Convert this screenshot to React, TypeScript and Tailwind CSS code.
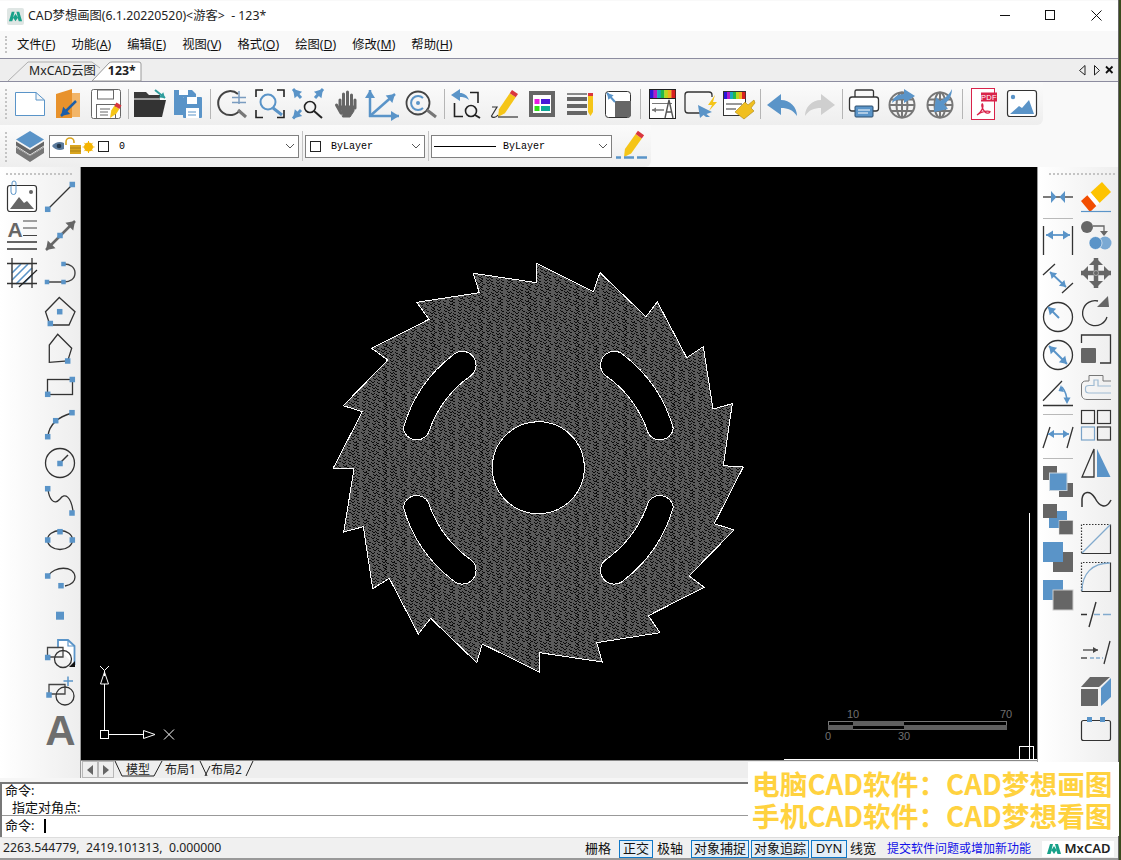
import React from "react";

const B = "#5a94c8";
const G = "#666666";
const UI = "[font-family:'Noto_Sans','Noto_Sans_CJK_SC',sans-serif]";

function Ic({ x, y, w = 38, h = 38, children }: { x: number; y: number; w?: number; h?: number; children?: React.ReactNode }) {
  return (
    <svg width={w} height={h} viewBox={`${x - w / 2} ${y - h / 2} ${w} ${h}`} fill="none" className="shrink-0 overflow-visible block">
      {children}
    </svg>
  );
}

function Sq({ x, y, s = 5.5 }: { x: number; y: number; s?: number }) {
  return <rect x={x - s / 2} y={y - s / 2} width={s} height={s} fill={B} />;
}

function Arr({ a, b, c = B, sw = 2, hl = 7, hw = 4, both = false }: { a: [number, number]; b: [number, number]; c?: string; sw?: number; hl?: number; hw?: number; both?: boolean }) {
  const dx = b[0] - a[0];
  const dy = b[1] - a[1];
  const l = Math.hypot(dx, dy);
  const ux = dx / l;
  const uy = dy / l;
  const head = (p: [number, number], s: number) => {
    const bx = p[0] - s * ux * hl;
    const by = p[1] - s * uy * hl;
    return `${p[0]},${p[1]} ${bx - uy * hw},${by + ux * hw} ${bx + uy * hw},${by - ux * hw}`;
  };
  return (
    <g>
      <line x1={a[0]} y1={a[1]} x2={b[0]} y2={b[1]} stroke={c} strokeWidth={sw} />
      <polygon points={head(b, 1)} fill={c} />
      {both && <polygon points={head(a, -1)} fill={c} />}
    </g>
  );
}

function Pencil({ tip, top, w = 5 }: { tip: [number, number]; top: [number, number]; w?: number }) {
  const dx = top[0] - tip[0];
  const dy = top[1] - tip[1];
  const l = Math.hypot(dx, dy);
  const ux = dx / l;
  const uy = dy / l;
  const nx = -uy * w;
  const ny = ux * w;
  const s = (k: number) => [tip[0] + ux * k, tip[1] + uy * k];
  const [bx, by] = s(7);
  const [cx, cy] = s(l - 4);
  return (
    <g>
      <polygon points={`${tip[0]},${tip[1]} ${bx + nx},${by + ny} ${cx + nx},${cy + ny} ${cx - nx},${cy - ny} ${bx - nx},${by - ny}`} fill="#f5c518" />
      <polygon points={`${cx + nx},${cy + ny} ${top[0] + nx},${top[1] + ny} ${top[0] - nx},${top[1] - ny} ${cx - nx},${cy - ny}`} fill="#d9363e" />
    </g>
  );
}

function Rainbow({ x, y, w, h }: { x: number; y: number; w: number; h: number }) {
  const cols = ["#2a18d8", "#b01ec8", "#18a8c0", "#22b84a", "#b8d820", "#f0b020", "#d82020"];
  return (
    <g>
      {cols.map((c, i) => (
        <rect key={c} x={x + (i * w) / cols.length} y={y} width={w / cols.length + 0.3} height={h} fill={c} />
      ))}
    </g>
  );
}

function Globe({ cx, cy }: { cx: number; cy: number }) {
  return (
    <g stroke="#777" strokeWidth="2">
      <circle cx={cx} cy={cy} r="12.5" />
      <ellipse cx={cx} cy={cy} rx="5.5" ry="12.5" />
      <line x1={cx} y1={cy - 12} x2={cx} y2={cy + 12} />
      <line x1={cx - 12} y1={cy} x2={cx + 12} y2={cy} />
      <line x1={cx - 11} y1={cy - 5.5} x2={cx + 11} y2={cy - 5.5} />
      <line x1={cx - 11} y1={cy + 6} x2={cx + 11} y2={cy + 6} />
    </g>
  );
}

const Sep = () => (
  <div className="w-[6px] h-[30px] shrink-0 flex justify-center">
    <div className="w-px h-full bg-[#b5b5b5]" />
  </div>
);

const top = (x: number, el: React.ReactNode) => (
  <Ic x={x} y={104}>
    {el}
  </Ic>
);

const group1 = [
  top(30, <path d="M15.5 92.5H36L44.5 100V115.5H15.5Z M36 92.5V100H44.5" stroke={B} fill="#fff" />),
  top(68, (
    <g>
      <rect x="72" y="93" width="8" height="24" fill="#f2b568" />
      <path d="M56 94 L72 89 V118 H56Z" fill="#e8922c" />
      <Arr a={[76, 101]} b={[61, 116]} c="#1d5ea8" sw={2.5} hl={8} hw={5} />
    </g>
  )),
  top(106, (
    <g>
      <rect x="91.5" y="89.5" width="29" height="29" rx="2" stroke="#666" fill="#fff" />
      <rect x="97.5" y="90" width="16" height="9" stroke="#666" />
      <rect x="96.5" y="104.5" width="19" height="14" stroke="#666" />
      <path d="M100 109h10M100 112h8M100 115h8" stroke="#666" />
      <Pencil tip={[110, 118]} top={[119, 104]} w={3} />
    </g>
  )),
];
const group2 = [
  top(150, (
    <g>
      <path d="M134 92h12l3 3h11v5h-26Z" fill="#3a3a3a" />
      <path d="M134 100H166L162 117H134Z" fill="#333" />
      <path d="M134 99H166" stroke="#fff" />
      <Arr a={[155, 90]} b={[165, 98]} c="#2e9d9d" sw={2} hl={5} hw={3.5} />
    </g>
  )),
  top(188, (
    <g>
      <path d="M174 90H192L196 94V97H183V115H174Z" fill={B} />
      <rect x="179" y="90" width="9" height="5" fill="#fff" />
      <rect x="183" y="97" width="19" height="21" rx="1" fill={B} />
      <rect x="187" y="97" width="10" height="7" fill="#fff" />
      <rect x="186" y="108" width="13" height="10" fill="#fff" />
      <path d="M188 112h8M188 115h8" stroke={B} />
    </g>
  )),
];
const group3 = [
  top(232, (
    <g>
      <path d="M238 94A12 12 0 1 0 240 110" stroke="#444" strokeWidth="2" />
      <path d="M232 97.5H246M239 91V104M232 102.5H246" stroke="#7a9cc0" strokeWidth="1.5" />
      <line x1="238" y1="110" x2="246" y2="117" stroke="#777" strokeWidth="3" />
    </g>
  )),
  top(270, (
    <g>
      <path d="M256 97V90H263M277 90H284V97M256 110V117.5H263M277 117.5H284V110" stroke="#222" strokeWidth="1.6" />
      <circle cx="268" cy="102" r="7.5" stroke={B} strokeWidth="2" />
      <line x1="273" y1="108" x2="282" y2="115" stroke={B} strokeWidth="3" />
    </g>
  )),
  top(308, (
    <g>
      <Arr a={[301, 98]} b={[293, 89]} sw={3} hl={8} hw={5} />
      <Arr a={[315, 98]} b={[323, 89]} sw={3} hl={8} hw={5} />
      <Arr a={[301, 110]} b={[293, 118.5]} sw={3} hl={8} hw={5} />
      <circle cx="310" cy="107" r="5.5" stroke="#222" strokeWidth="1.6" />
      <line x1="314" y1="111" x2="322" y2="118" stroke="#222" strokeWidth="2" />
    </g>
  )),
  top(346, (
    <g stroke="#666" strokeLinecap="round" strokeWidth="3">
      <path d="M340 100V110M343.5 94V107M347.5 92V107M351.5 95V108M355 100V108" />
      <path d="M336.5 105L341 113" />
      <path d="M340 106H354V111L350 117H343Z" fill="#666" strokeWidth="1" />
    </g>
  )),
  top(384, (
    <g>
      <Arr a={[370, 117]} b={[370, 90]} sw={2.5} hl={8} hw={5} />
      <Arr a={[369, 116]} b={[399, 116]} sw={2.5} hl={8} hw={5} />
      <Arr a={[370, 116]} b={[395, 94]} sw={2.5} hl={8} hw={5} />
    </g>
  )),
  top(422, (
    <g>
      <circle cx="418" cy="103" r="11.5" stroke="#444" strokeWidth="1.8" />
      <path d="M423 98A7 7 0 1 0 423 108" stroke={B} strokeWidth="2" />
      <circle cx="418" cy="103" r="2" fill={B} />
      <line x1="427" y1="110" x2="436" y2="117" stroke="#777" strokeWidth="3" />
    </g>
  )),
];
const group4 = [
  top(466, (
    <g>
      <path d="M451 95L460 89V93C464 93 467 95 469 100C465 97 463 97 460 97V101Z" fill={B} />
      <path d="M470 92.5H478V103M454.5 103V116.5H463" stroke="#222" strokeWidth="1.6" />
      <circle cx="471" cy="111" r="5.5" stroke="#222" strokeWidth="1.6" />
      <line x1="475" y1="115" x2="480" y2="118" stroke="#222" strokeWidth="2" />
    </g>
  )),
  top(504, (
    <g>
      <Pencil tip={[498, 117]} top={[515, 92]} w={3.6} />
      <path d="M492 107H497L491.5 116C492 118 496 118 498 115" stroke="#333" strokeWidth="1.2" />
      <line x1="498" y1="117" x2="518" y2="117" stroke="#333" strokeWidth="1.2" />
    </g>
  )),
  top(542, (
    <g>
      <rect x="529" y="91" width="26" height="26" fill="#666" />
      <rect x="533" y="95" width="18" height="18" fill="#fff" />
      <rect x="534.5" y="99" width="5" height="5" fill="#e81ae0" />
      <rect x="541" y="99" width="9" height="5" fill="#4a18d8" />
      <rect x="534.5" y="106" width="5" height="5" fill="#2ee018" />
      <rect x="541" y="106" width="9" height="5" fill="#0fa898" />
    </g>
  )),
  top(580, (
    <g>
      <path d="M567 94H587" stroke="#666" strokeWidth="1.5" />
      <rect x="567" y="97" width="20" height="4" fill="#666" />
      <rect x="567" y="104" width="20" height="4" fill="#666" />
      <rect x="567" y="111" width="20" height="4" fill="#666" />
      <path d="M588 93H593V112L590.5 116L588 112Z" fill="#f5c518" />
      <rect x="588" y="93" width="5" height="3" fill="#d9363e" />
    </g>
  )),
  top(618, (
    <g>
      <rect x="605.5" y="91.5" width="25" height="26" rx="3" stroke="#333" fill="#fff" />
      <path d="M615 101H631V114A3 3 0 0 1 628 117H615Z" fill="#666" />
      <Arr a={[615, 102]} b={[607, 93]} sw={2} hl={6} hw={3.5} />
    </g>
  )),
];
const group5 = [
  top(661, (
    <g>
      <rect x="648.5" y="89.5" width="26" height="29" stroke="#222" fill="#fff" />
      <Rainbow x={649} y={90} w={25} h={8} />
      <line x1="649" y1="98.5" x2="674" y2="98.5" stroke="#222" />
      <path d="M651 103.5H671" stroke="#777" />
      <Arr a={[663, 110]} b={[651, 110]} c="#777" sw={1.5} hl={4} hw={2.5} />
      <path d="M664 118L668 100L672 118M665 112H671" stroke="#555" strokeWidth="1.4" />
    </g>
  )),
  top(700, (
    <g>
      <path d="M705 113H688A3 3 0 0 1 685 110V95A3 3 0 0 1 688 92H709A3 3 0 0 1 712 95V97" stroke="#333" strokeWidth="1.3" />
      <path d="M699 106L713 113L707.5 115L711 118L707 118L704.5 116L701 119Z" fill={B} transform="translate(-1 -1)" />
      <path d="M715 95L708 105H712L709 111L717 102H713Z" fill="#f5c518" />
    </g>
  )),
  top(738, (
    <g>
      <rect x="723.5" y="91.5" width="22" height="24" stroke="#333" fill="#fff" />
      <Rainbow x={724} y={92} w={21} h={7} />
      <path d="M726 104H742M726 109H736" stroke="#777" strokeWidth="1.4" />
      <path d="M735 112L745 102L748 105L754 100L755 103L751 108L754 111L744 119Z" fill="#f0bf20" stroke="#a98412" strokeWidth=".6" />
    </g>
  )),
];
const group6 = [
  top(782, <path d="M767 105L781 94V100C790 100 797 107 797 116C793 110 788 108 781 108V115Z" fill={B} />),
  top(820, <path d="M835 105L821 94V100C812 100 805 107 805 116C809 110 814 108 821 108V115Z" fill="#cfcfcf" />),
];
const group7 = [
  top(864, (
    <g>
      <path d="M855 99V91.5A1.5 1.5 0 0 1 856.5 90H872A1.5 1.5 0 0 1 873.5 91.5V99" stroke="#333" strokeWidth="1.3" />
      <rect x="849.5" y="97" width="29" height="14" rx="2.5" stroke="#333" strokeWidth="1.3" fill="#fff" />
      <rect x="855" y="106" width="18" height="11" rx="1" fill={B} stroke="#2d4e6e" />
      <path d="M858 110H870M858 113H868" stroke="#fff" />
    </g>
  )),
  top(902, (
    <g>
      <Globe cx={902} cy={105} />
      <path d="M892 103C893 97 898 94 904 94V89L915 96L904 103V99C899 99 895 100 892 103Z" fill={B} />
    </g>
  )),
  top(940, (
    <g>
      <Globe cx={940} cy={105} />
      <path d="M952 89C952 96 948 102 944 104L948 109L934 112L936 97L940 101C944 99 949 95 952 89Z" fill={B} />
    </g>
  )),
];
const group8 = [
  top(984, (
    <g>
      <rect x="971.5" y="88.5" width="23" height="31" stroke="#d9234a" fill="#fff" />
      <rect x="981" y="92.5" width="16" height="9" fill="#d9234a" />
      <text x="989" y="100" textAnchor="middle" fontSize="7.5" fill="#fff" fontFamily="'Liberation Sans'" letterSpacing=".4">PDF</text>
      <path d="M977 115C981 113 984 107 982.5 104C981 104 982 109 985 112C987 114 990 113 990 111.5C988 110.5 982 111 977 115Z" stroke="#d9234a" strokeWidth="1.3" />
    </g>
  )),
  top(1022, (
    <g>
      <rect x="1007.5" y="90.5" width="29" height="26" rx="2.5" stroke="#333" strokeWidth="1.2" fill="#fff" />
      <circle cx="1013" cy="97" r="2.2" fill={B} />
      <path d="M1010 114L1019 106L1022 108L1029 100L1034 114Z" fill={B} />
    </g>
  )),
];

function Toolbar1() {
  return (
    <div className="relative w-[1043px] h-[43px] shrink-0 flex items-center pl-[11px] rounded-br-md bg-gradient-to-b from-[#fbfbfb] to-[#eeeeee]">
      <div className="absolute left-[5px] top-[7px] h-[30px] border-l-2 border-dotted border-[#c4c4c4]" />
      {group1}
      <Sep />
      {group2}
      <Sep />
      {group3}
      <Sep />
      {group4}
      <Sep />
      {group5}
      <Sep />
      {group6}
      <Sep />
      {group7}
      <Sep />
      {group8}
    </div>
  );
}

function Chev() {
  return (
    <svg width="10" height="6" viewBox="0 0 10 6" fill="none" className="shrink-0">
      <path d="M1 1L5 5L9 1" stroke="#555" />
    </svg>
  );
}

function Box() {
  return <div className="w-[11px] h-[11px] border border-[#222] bg-white shrink-0" />;
}

const MONO = "[font-family:'Liberation_Mono',monospace]";

function Toolbar2() {
  return (
    <div className="relative w-[651px] h-[42px] shrink-0 flex items-center rounded-br-md bg-gradient-to-b from-[#fbfbfb] to-[#eeeeee]">
      <div className="absolute left-[5px] top-[7px] h-[30px] border-l-2 border-dotted border-[#c4c4c4]" />
      <div className="ml-[11px] shrink-0">
        <Ic x={30} y={146}>
          <path d="M30 150L44 141.5V147L30 156L16 147V141.5Z" fill={G} />
          <path d="M30 156L44 147.5V153L30 162L16 153V147.5Z" fill="#777" />
          <path d="M30 131L44 139.5L30 148L16 139.5Z" fill={B} />
          <path d="M16 146L30 155L44 146" stroke="#fff" strokeWidth=".8" />
        </Ic>
      </div>
      <div className="w-[250px] h-[23px] border border-[#808080] bg-white flex items-center shrink-0">
        <svg width="56" height="20" viewBox="50 136 56 20" fill="none" className="shrink-0">
          <path d="M52 146C55 142 60 141 64 143V149C60 151 55 150 52 146Z" fill="#5a7a9c" />
          <circle cx="59" cy="146" r="2.3" fill="#24384c" />
          <path d="M66 145V142A4 4 0 0 1 74 142V143" stroke="#d9a520" strokeWidth="1.6" />
          <rect x="70" y="145" width="11" height="9" fill="#d9a520" />
          <path d="M70 148H81M70 151H81" stroke="#9a7312" strokeWidth=".7" />
          <circle cx="88.5" cy="147" r="4.5" fill="#f5b400" />
          <path d="M88.5 141V153M82.5 147H94.5M84.3 142.8L92.7 151.2M92.7 142.8L84.3 151.2" stroke="#f5b400" />
        </svg>
        <div className="-ml-[8px]"><Box /></div>
        <span className={`ml-[10px] text-[10px] text-black ${MONO}`}>0</span>
        <div className="flex-1" />
        <div className="mr-[3px]"><Chev /></div>
      </div>
      <div className="w-[6px] h-[30px] flex justify-center shrink-0"><div className="w-px h-full bg-[#c4c4c4]" /></div>
      <div className="w-[120px] h-[23px] border border-[#808080] bg-white flex items-center pl-[4px] shrink-0">
        <Box />
        <span className={`ml-[10px] text-[10px] text-black ${MONO}`}>ByLayer</span>
        <div className="flex-1" />
        <div className="mr-[3px]"><Chev /></div>
      </div>
      <div className="w-[6px] h-[30px] flex justify-center shrink-0"><div className="w-px h-full bg-[#c4c4c4]" /></div>
      <div className="w-[181px] h-[23px] border border-[#808080] bg-white flex items-center pl-[2px] shrink-0">
        <div className="w-[62px] h-px bg-black shrink-0" />
        <span className={`ml-[7px] text-[10px] text-black ${MONO}`}>ByLayer</span>
        <div className="flex-1" />
        <div className="mr-[3px]"><Chev /></div>
      </div>
      <Ic x={630} y={146}>
        <Pencil tip={[623, 157]} top={[640, 133]} w={3.8} />
        <path d="M615 157.5H620M623 157.5H633M636 157.5H646" stroke={B} strokeWidth="2.4" />
      </Ic>
    </div>
  );
}

const Cell = ({ x, y, children }: { x: number; y: number; children?: React.ReactNode }) => (
  <Ic x={x} y={y}>{children}</Ic>
);

const LeftA = [
  <Cell key="a" x={22} y={198}>
    <rect x="7.5" y="185.5" width="29" height="26" rx="2.5" stroke="#333" strokeWidth="1.2" fill="#fff" />
    <circle cx="31" cy="192" r="2" fill="#666" />
    <path d="M10 209L19 197L24 203L27 201L34 209Z" fill="#666" />
    <path d="M12 185.5V183A2 2 0 0 1 16 183V192A1.5 1.5 0 0 1 11 192V186" stroke={B} strokeWidth="1" fill="none" />
  </Cell>,
  <Cell key="b" x={22} y={236}>
    <text x="7.5" y="237" fontSize="21" fontWeight="700" fill="#666" fontFamily="'Liberation Sans'">A</text>
    <path d="M23 221H37M23 228H37M23 235.5H37" stroke="#444" strokeWidth="1.2" />
    <path d="M7 242H37M7 249H37" stroke="#333" strokeWidth="1.3" />
  </Cell>,
  <Cell key="c" x={22} y={274}>
    <rect x="12" y="264" width="20" height="20" fill="#fff" stroke="#999" strokeWidth=".6" />
    <path d="M12 273L21 264M12 280L28 264M16 284L32 268M23 284L32 275" stroke={B} strokeWidth="1.6" />
    <path d="M7 263.5H37M7 283.5H37M12 258V288M32 258V288" stroke="#333" strokeWidth="1.3" />
    <path d="M19 287L37 270" stroke="#222" strokeWidth="1.2" />
  </Cell>,
];

const LeftB = [
  <Cell key="1" x={60} y={198}>
    <line x1="48" y1="209" x2="72" y2="185" stroke="#333" strokeWidth="1.3" />
    <Sq x={47.7} y={209.3} /><Sq x={72.3} y={184.5} />
  </Cell>,
  <Cell key="2" x={60} y={236}>
    <Arr a={[46, 250]} b={[75, 221]} c="#666" sw={2.5} hl={8} hw={5.5} both />
    <Sq x={60} y={235.5} />
  </Cell>,
  <Cell key="3" x={60} y={274}>
    <path d="M48 282H64M64 264C70 264 75 267 75 273C75 279 70 282 64 282" stroke="#444" strokeWidth="1.4" />
    <Sq x={47} y={282} s={4.5} /><Sq x={63.5} y={282} s={4.5} /><Sq x={63.5} y={264} s={4.5} />
  </Cell>,
  <Cell key="4" x={60} y={312}>
    <path d="M59.3 297.5L75 311.7L69 325H50L45.5 311.7Z" stroke="#333" strokeWidth="1.3" />
    <Sq x={59.7} y={311.7} /><Sq x={50.3} y={323.5} />
  </Cell>,
  <Cell key="5" x={60} y={350}>
    <path d="M57.7 334.3L71.7 348.3L67.7 361L49.3 362.3V345Z" stroke="#333" strokeWidth="1.3" />
    <Sq x={67.7} y={361} />
  </Cell>,
  <Cell key="6" x={60} y={388}>
    <rect x="47.5" y="379.5" width="25" height="15" stroke="#333" strokeWidth="1.3" />
    <Sq x={47.7} y={394.3} /><Sq x={72.3} y={379.5} />
  </Cell>,
  <Cell key="7" x={60} y={426}>
    <path d="M48 436C49 427 54 418 72 413" stroke="#333" strokeWidth="1.3" />
    <Sq x={47.7} y={436.7} /><Sq x={55.7} y={420.7} /><Sq x={72} y={412.7} />
  </Cell>,
  <Cell key="8" x={60} y={464}>
    <circle cx="60" cy="463" r="14.5" stroke="#333" strokeWidth="1.3" />
    <line x1="60" y1="463" x2="68" y2="455" stroke="#333" strokeWidth="1.5" />
    <Sq x={60} y={463.5} />
  </Cell>,
  <Cell key="9" x={60} y={502}>
    <path d="M48 489C49 499 54 506 60 499C65 492 71 497 73 511" stroke="#333" strokeWidth="1.3" />
    <Sq x={47.7} y={488.7} /><Sq x={72} y={513} />
  </Cell>,
  <Cell key="10" x={60} y={540}>
    <ellipse cx="60" cy="540" rx="12.5" ry="9.5" stroke="#333" strokeWidth="1.3" />
    <Sq x={47.7} y={540} /><Sq x={60} y={531.7} /><Sq x={72.3} y={540} />
  </Cell>,
  <Cell key="11" x={60} y={578}>
    <path d="M48 576C54 566 74 565 75 577C75 582 70 585 65 586" stroke="#333" strokeWidth="1.3" />
    <Sq x={47.7} y={576} /><Sq x={61} y={585.7} />
  </Cell>,
  <Cell key="12" x={60} y={616}>
    <Sq x={60} y={615.7} s={8} />
  </Cell>,
  <Cell key="13" x={60} y={654}>
    <path d="M58 648V640H68L74.5 646V665" stroke={B} strokeWidth="1.8" fill="#fff" />
    <path d="M68 640V646H74" stroke={B} strokeWidth="1.2" />
    <path d="M47.5 657V647.5H63V657H47.5" stroke="#444" strokeWidth="1.3" />
    <circle cx="63" cy="659" r="8.5" stroke="#333" strokeWidth="1.3" />
    <Sq x={47.7} y={657.5} />
    <polygon points="75,667 69,667 75,661" fill="#111" />
  </Cell>,
  <Cell key="14" x={60} y={692}>
    <path d="M49 694V684.5H65V694H49" stroke="#444" strokeWidth="1.3" />
    <circle cx="65" cy="696" r="9" stroke="#333" strokeWidth="1.3" />
    <Sq x={49} y={695} />
    <path d="M68 676.5V686M63.5 681H73" stroke={B} strokeWidth="1.5" />
  </Cell>,
  <Cell key="15" x={60} y={730}>
    <text x="60.5" y="744.5" textAnchor="middle" fontSize="42" fontWeight="700" fill="#6e6e6e" fontFamily="'Liberation Sans'">A</text>
  </Cell>,
];

const RightA1 = (
  <Cell x={1058} y={197}>
    <line x1="1043" y1="197" x2="1073" y2="197" stroke="#333" strokeWidth="1.3" />
    <polygon points="1051,191 1051,203 1056.5,197" fill={B} />
    <polygon points="1065,191 1065,203 1059.5,197" fill={B} />
  </Cell>
);
const HSep = ({ h }: { h: string }) => (
  <div className={`${h} flex items-center justify-center`}>
    <div className="w-[30px] h-px bg-[#b9b9b9]" />
  </div>
);

const RightA = [
  <HSep key="s1" h="h-[5px]" />,
  <Cell key="2" x={1058} y={240}>
    <path d="M1043.5 226V255M1072.5 226V255" stroke="#333" strokeWidth="1.3" />
    <Arr a={[1046, 235]} b={[1070, 235]} sw={1.8} hl={7} hw={4.5} both />
  </Cell>,
  <Cell key="3" x={1058} y={278}>
    <path d="M1043 275L1055 264M1062 293L1073 283" stroke="#333" strokeWidth="1.3" />
    <Arr a={[1050, 272]} b={[1066, 287]} sw={1.8} hl={6} hw={4} both />
  </Cell>,
  <Cell key="4" x={1058} y={316}>
    <circle cx="1058" cy="317" r="14.5" stroke="#333" strokeWidth="1.3" />
    <Arr a={[1059, 318]} b={[1048, 307]} sw={2} hl={7} hw={4.5} />
  </Cell>,
  <Cell key="5" x={1058} y={354}>
    <circle cx="1058" cy="355" r="14.5" stroke="#333" strokeWidth="1.3" />
    <Arr a={[1049, 346]} b={[1067, 364]} sw={2} hl={7} hw={4.5} both />
  </Cell>,
  <Cell key="6" x={1058} y={392}>
    <path d="M1043 400.7L1062 381M1043 405.5H1073" stroke="#333" strokeWidth="1.3" />
    <path d="M1062 387C1066 392 1067 397 1067 402" stroke={B} strokeWidth="1.5" />
    <polygon points="1061,385 1064,392 1058.5,391" fill={B} />
    <polygon points="1067,404 1063.5,397.5 1070.5,397.5" fill={B} />
  </Cell>,
  <HSep key="s2" h="h-[6px]" />,
  <Cell key="7" x={1058} y={436}>
    <path d="M1043 448L1050 427M1067 448L1073 427" stroke="#333" strokeWidth="1.3" />
    <Arr a={[1048, 434]} b={[1069, 434]} sw={1.6} hl={6} hw={4} both />
  </Cell>,
  <HSep key="s3" h="h-[6px]" />,
  <Cell key="8" x={1058} y={480}>
    <rect x="1043" y="466" width="14" height="14" fill="#666" />
    <rect x="1059" y="483" width="14" height="14" fill="#666" />
    <rect x="1049.5" y="473" width="17.5" height="17.5" fill={B} stroke="#c8d4de" />
  </Cell>,
  <Cell key="9" x={1058} y={518}>
    <rect x="1043" y="504" width="14" height="14" fill="#666" />
    <rect x="1057" y="511" width="10" height="9" fill={B} />
    <rect x="1049" y="518" width="10" height="10" fill={B} />
    <rect x="1059" y="520.5" width="14" height="14" fill="#666" stroke="#ddd" strokeWidth=".5" />
  </Cell>,
  <Cell key="10" x={1058} y={556}>
    <path d="M1063 552H1073V572H1053V562H1063Z" fill="#666" />
    <rect x="1043" y="542" width="20" height="20" fill={B} />
  </Cell>,
  <Cell key="11" x={1058} y={594}>
    <rect x="1043" y="580" width="20" height="20" fill={B} />
    <rect x="1053" y="590" width="20" height="20" fill="#666" stroke="#ccc" />
  </Cell>,
];

const RightB = [
  <Cell key="1" x={1096} y={197}>
    <polygon points="1102,182 1111,192 1099.5,203 1090.5,192.5" fill="#fdc300" />
    <polygon points="1090.5,192.5 1099.5,203 1096.3,206 1087.3,195.3" fill="#fff" />
    <polygon points="1087.3,195.3 1096.3,206 1090,212 1081,201" fill="#f24d00" />
    <line x1="1081" y1="211.5" x2="1111" y2="211.5" stroke={B} strokeWidth="1.2" />
  </Cell>,
  <Cell key="2" x={1096} y={235}>
    <circle cx="1087" cy="227" r="6" fill="#666" />
    <path d="M1093 226H1104V233" stroke="#666" strokeWidth="1.3" />
    <polygon points="1100,231 1108,231 1104,236" fill="#666" />
    <circle cx="1105" cy="243" r="6.5" fill="#7aa9d3" />
    <circle cx="1095.5" cy="243" r="6.5" fill={B} stroke="#fff" strokeWidth=".6" />
  </Cell>,
  <Cell key="3" x={1096} y={273}>
    <Arr a={[1096, 273]} b={[1096, 258]} c="#666" sw={4.5} hl={7} hw={7} />
    <Arr a={[1096, 273]} b={[1096, 288]} c="#666" sw={4.5} hl={7} hw={7} />
    <Arr a={[1096, 273]} b={[1081, 273]} c="#666" sw={4.5} hl={7} hw={7} />
    <Arr a={[1096, 273]} b={[1111, 273]} c="#666" sw={4.5} hl={7} hw={7} />
    <circle cx="1096" cy="273" r="2.5" stroke="#aaa" strokeWidth="1" />
  </Cell>,
  <Cell key="4" x={1096} y={311}>
    <path d="M1098 301A12.5 12.5 0 1 0 1107 317" stroke="#333" strokeWidth="1.3" />
    <polygon points="1108,296 1109,307 1097,307" fill="#666" />
  </Cell>,
  <Cell key="5" x={1096} y={349}>
    <path d="M1081.5 343V335H1110.5V363H1100" stroke="#333" strokeWidth="1.3" />
    <rect x="1081" y="348" width="15" height="15" rx="1" fill="#666" />
  </Cell>,
  <Cell key="6" x={1096} y={387}>
    <path d="M1111 399.5H1087C1083 399.5 1081.5 397 1081.5 394V385C1081.5 382 1084 381 1086 381H1089V375.5H1103V381H1111" stroke="#777" strokeWidth="1" />
    <path d="M1111 393H1089C1086 393 1085.5 392 1085.5 390V388C1085.5 386 1086.5 385.5 1089 385.5H1094V380H1098V386H1111" stroke="#9fbbd3" strokeWidth="1.2" />
  </Cell>,
  <Cell key="7" x={1096} y={425}>
    <rect x="1081.5" y="410.5" width="13" height="13" stroke="#333" strokeWidth="1.2" />
    <rect x="1097.5" y="410.5" width="13" height="13" stroke="#333" strokeWidth="1.2" />
    <rect x="1081.5" y="427" width="13" height="13" stroke="#7aa3c8" strokeWidth="1.2" />
    <rect x="1097.5" y="427" width="13" height="13" stroke="#333" strokeWidth="1.2" />
  </Cell>,
  <Cell key="8" x={1096} y={463}>
    <path d="M1094 449V477H1082Z" stroke="#333" strokeWidth="1.3" />
    <path d="M1097 449V477H1110.5Z" fill={B} />
  </Cell>,
  <Cell key="9" x={1096} y={501}>
    <path d="M1082 507V499C1083 491 1090 490 1095 498C1099 506 1106 510 1111 500" stroke="#333" strokeWidth="1.5" />
  </Cell>,
  <Cell key="10" x={1096} y={539}>
    <path d="M1081.5 553.5H1110.5V524.5" stroke="#333" strokeWidth="1.2" />
    <path d="M1081.5 553V524.5H1110" stroke="#333" strokeWidth="1.2" strokeDasharray="1.5 1.5" />
    <line x1="1082" y1="553" x2="1110" y2="525" stroke="#82aacd" strokeWidth="1.3" />
  </Cell>,
  <Cell key="11" x={1096} y={577}>
    <path d="M1081.5 591.5H1110.5V562.5" stroke="#333" strokeWidth="1.2" />
    <path d="M1081.5 591V562.5H1110" stroke="#333" strokeWidth="1.2" strokeDasharray="1.5 1.5" />
    <path d="M1082 591C1082 574 1092 563 1110 563" stroke="#82aacd" strokeWidth="1.3" />
  </Cell>,
  <Cell key="12" x={1096} y={615}>
    <path d="M1081 614.5H1087M1089 627L1096 602" stroke="#333" strokeWidth="1.4" />
    <path d="M1094 614.5H1100M1103 614.5H1111" stroke="#82aacd" strokeWidth="1.4" />
  </Cell>,
  <Cell key="13" x={1096} y={653}>
    <Arr a={[1083, 650]} b={[1098, 650]} c="#444" sw={1.3} hl={5} hw={3} />
    <path d="M1081 658H1087" stroke="#333" strokeWidth="1.3" />
    <path d="M1090 658H1103" stroke="#82aacd" strokeWidth="1.3" strokeDasharray="4 2" />
    <path d="M1104 664L1110 641" stroke="#333" strokeWidth="1.3" />
  </Cell>,
  <Cell key="14" x={1096} y={691}>
    <rect x="1081" y="689" width="17" height="17" fill="#666" />
    <path d="M1081 687L1090 677H1110L1099 687Z" fill="#666" />
    <path d="M1101 688L1111 678V697L1101 706Z" fill={B} />
  </Cell>,
  <Cell key="15" x={1096} y={729}>
    <rect x="1081.5" y="720.5" width="29" height="20" rx="2" stroke="#333" strokeWidth="1.2" />
    <rect x="1087" y="717" width="5" height="5" fill={B} />
    <rect x="1100" y="717" width="5" height="5" fill={B} />
  </Cell>,
];

const SAW =
  "536.7,263.3 593.3,291.7 600,272.7 646,316.7 657.3,301.7 686.7,357.7 703.3,346.7 713,409 732.3,403.7 723.3,465.7 743.3,467 714.3,523.7 734,530 689,576 704.3,587.3 648.3,615.7 660,632.7 596.7,642.7 602.3,662 539.7,652.7 539.3,672 482.3,644 476.7,662.7 430.7,618.3 418.3,634 389.3,578.3 372.7,588.7 363.3,526.7 343.7,532 354,469 333.3,468 362.3,411.7 343.3,405.7 387.7,360 371.7,348.3 429,319.3 416.7,302.3 479.3,292.7 473.3,273.3 536.7,282.7";
const SLOT = "M453 355A141 141 0 0 0 403.3 428.3A13.5 13.5 0 0 0 428.3 433.3A115 115 0 0 1 471.7 375A13.5 13.5 0 0 0 453 355Z";
const CX = 538.3;
const CY = 467.7;
const TILE = 48;

function hatch() {
  const out: string[] = [];
  let seed = 17;
  const rnd = (n: number) => {
    seed = (seed * 1103 + 12345) % 65536;
    return seed % n;
  };
  for (let y = 0; y < TILE; y += 3) {
    for (let x = 0; x < TILE; x += 5) {
      const sx = x + rnd(3);
      const sy = y + rnd(2);
      const w = [0, 1, 1, 0];
      const n = 3 + rnd(2);
      for (let i = 0; i < n; i++) {
        out.push(`M${(sx + i) % TILE} ${(sy + w[i]) % TILE}h1v1h-1z`);
      }
    }
  }
  return out.join("");
}

function Canvas() {
  return (
    <svg width="956" height="593" viewBox="81 167 956 593" className="block shrink-0 bg-black">
      <defs>
        <pattern id="hatchFill" width={TILE} height={TILE} patternUnits="userSpaceOnUse">
          <rect width={TILE} height={TILE} fill="#5a5a5a" />
          <path d={hatch()} fill="#0a0a0a" shapeRendering="crispEdges" />
        </pattern>
      </defs>
      <g shapeRendering="crispEdges">
        <polygon points={SAW} fill="url(#hatchFill)" stroke="#fff" strokeWidth="1" />
        <circle cx={CX} cy={CY} r="46" fill="#000" stroke="#fff" />
        <path d={SLOT} fill="#000" stroke="#fff" />
        <path d={SLOT} fill="#000" stroke="#fff" transform={`translate(${2 * CX} 0) scale(-1 1)`} />
        <path d={SLOT} fill="#000" stroke="#fff" transform={`translate(0 ${2 * CY}) scale(1 -1)`} />
        <path d={SLOT} fill="#000" stroke="#fff" transform={`translate(${2 * CX} ${2 * CY}) scale(-1 -1)`} />
      </g>

      <g stroke="#fff" fill="none" shapeRendering="crispEdges">
        <rect x="100.5" y="730.5" width="8" height="8" />
        <path d="M104.5 730V684M109 734.5H143" />
      </g>
      <g stroke="#fff" fill="none">
        <path d="M100.5 684L104.5 672L108.5 684Z M143.5 730.5L155 734.5L143.5 738.5Z" />
        <path d="M100 666L104.5 670.5L109 666M104.5 670.5V676" />
        <path d="M164 729.5L174 739.5M174 729.5L164 739.5" />
      </g>

      <g shapeRendering="crispEdges">
        <rect x="828.5" y="721.5" width="178" height="8" stroke="#777" fill="none" />
        <rect x="828" y="725" width="25" height="5" fill="#5f5f5f" />
        <rect x="853" y="721" width="51" height="5" fill="#5f5f5f" />
        <rect x="904" y="725" width="103" height="5" fill="#5f5f5f" />
      </g>
      <g fontFamily="'Liberation Sans'" fontSize="11" fill="#707070">
        <text x="853" y="718" textAnchor="middle">10</text>
        <text x="1006" y="718" textAnchor="middle">70</text>
        <text x="828" y="740" textAnchor="middle">0</text>
        <text x="904" y="740" textAnchor="middle">30</text>
      </g>

      <g stroke="#fff" fill="none" shapeRendering="crispEdges">
        <path d="M1029.5 513V760M784 759.5H1037" />
        <rect x="1019.5" y="746.5" width="14" height="13" />
      </g>
    </svg>
  );
}

const menu: [string, string][] = [
  ["文件", "F"],
  ["功能", "A"],
  ["编辑", "E"],
  ["视图", "V"],
  ["格式", "O"],
  ["绘图", "D"],
  ["修改", "M"],
  ["帮助", "H"],
];

function Logo({ s = 16 }: { s?: number }) {
  return (
    <svg width={s} height={s} viewBox="0 0 16 16" className="shrink-0">
      <path d="M1 13L4 3H7L5.5 9L8 5L10.5 9L9 3H12L15 13H11.5L10.3 9.5L8 13L5.7 9.5L4.5 13Z" fill="#17a189" />
    </svg>
  );
}

function StatusBtn({ t, on, w }: { t: string; on?: boolean; w: string }) {
  return (
    <div className={`h-[18px] flex items-center justify-center shrink-0 ${w} ${on ? "border border-[#0f78c8] bg-[#e4eff8]" : ""}`}>
      <span className="text-[13px] leading-none text-[#111]">{t}</span>
    </div>
  );
}

export default function App() {
  return (
    <div className={`relative w-[1121px] h-[860px] overflow-hidden bg-[#3a4a1e] ${UI}`}>
      <div className="w-[1119px] h-[860px] pt-px flex flex-col bg-[#f9f9f9] border-r border-[#666]">
        {/* title bar */}
        <div className="h-[30px] bg-white flex items-center shrink-0">
          <div className="ml-[7px] w-[17px] h-[17px] rounded-[2px] bg-[#dfe6e4] flex items-center justify-center">
            <Logo s={15} />
          </div>
          <span className="ml-[4px] text-[12.3px] leading-none text-[#222] whitespace-pre">CAD梦想画图(6.1.20220520)&lt;游客&gt;  - 123*</span>
          <div className="flex-1" />
          <svg width="112" height="12" viewBox="1000 10 112 12" fill="none" className="mr-[6px]">
            <path d="M1000 15.5H1010" stroke="#111" />
            <rect x="1045.5" y="10.5" width="9" height="9" stroke="#111" />
            <path d="M1091.5 10.5L1101.5 20.5M1101.5 10.5L1091.5 20.5" stroke="#111" />
          </svg>
        </div>
        {/* menu */}
        <div className="relative h-[27px] flex items-center pl-[17px] pt-[2px] gap-[16px] shrink-0 bg-[#f9f9f9]">
          <div className="absolute left-[5px] top-[5px] h-[17px] border-l-2 border-dotted border-[#c4c4c4]" />
          {menu.map(([a, b]) => (
            <span key={a} className="text-[12.3px] text-[#111] whitespace-pre">
              {a}(<span className="underline">{b}</span>)
            </span>
          ))}
        </div>
        {/* tabs */}
        <div className="relative h-[24px] shrink-0 bg-[#eeeeee] border-t border-b border-[#8d8da0] flex items-center pt-[3px]">
          <svg className="absolute left-0 top-0" width="150" height="23" viewBox="0 59 150 23" fill="none">
            <path d="M8 81L28 62H92L100 68" stroke="#b0b0b0" />
            <path d="M92 81L109 63Q110 62 112 62H139Q141 62 141 64V81Z" fill="#fff" stroke="#999" />
          </svg>
          <span className="relative ml-[29px] text-[12.3px] leading-none text-[#222]">MxCAD云图</span>
          <span className="relative ml-[12px] text-[12.3px] leading-none font-bold text-[#222]">123*</span>
          <svg className="absolute left-[1075px] top-[6px]" width="40" height="12" viewBox="1075 65 40 12" fill="none">
            <path d="M1085 65.5L1079.5 70.5L1085 75V65.5M1094.5 65.5L1099.5 70.5L1094.5 75V65.5" stroke="#222" />
            <path d="M1106 66.5L1112.5 73M1112.5 66.5L1106 73" stroke="#111" strokeWidth="1.8" />
          </svg>
        </div>
        <Toolbar1 />
        <Toolbar2 />
        {/* middle */}
        <div className="flex h-[611px] shrink-0">
          <div className="relative w-[81px] shrink-0 bg-gradient-to-r from-white to-[#eeeeee] border-r border-[#999]">
            <div className="absolute left-[6px] top-[6px] w-[66px] border-t-2 border-dotted border-[#c4c4c4]" />
            <div className="flex pl-[3px] pt-[12px]">
              <div className="w-[38px] flex flex-col">{LeftA}</div>
              <div className="w-[38px] flex flex-col">{LeftB}</div>
            </div>
          </div>
          <div className="flex flex-col w-[956px] shrink-0">
            <Canvas />
            <div className="relative h-[18px] bg-[#eeeeee] border-t border-[#888] flex items-center text-[12px] text-[#222]">
              <div className="ml-[1px] w-[16px] h-[17px] bg-[#eeeeee] border border-[#b8b8b8] flex items-center justify-center">
                <div className="w-0 h-0 border-y-[5px] border-y-transparent border-r-[6px] border-r-[#666]" />
              </div>
              <div className="w-[16px] h-[17px] bg-[#eeeeee] border border-[#b8b8b8] flex items-center justify-center">
                <div className="w-0 h-0 border-y-[5px] border-y-transparent border-l-[6px] border-l-[#666]" />
              </div>
              <svg className="absolute left-[32px] top-0" width="144" height="17" viewBox="113 761 144 17" fill="none" stroke="#222">
                <path d="M115 761L122 776H154L162 761" />
                <path d="M200 761L207 776" />
                <path d="M205 776L210 766" />
                <path d="M246 776L253 761" />
              </svg>
              <span className="relative ml-[12px] leading-none">模型</span>
              <span className="relative ml-[15px] leading-none">布局1</span>
              <span className="relative ml-[15px] leading-none">布局2</span>
            </div>
          </div>
          <div className="relative flex-1 bg-gradient-to-r from-white to-[#eeeeee] border-l border-[#999]">
            <div className="absolute left-[11px] top-[6px] w-[66px] border-t-2 border-dotted border-[#c4c4c4]" />
            <div className="flex pl-[1px] pt-[11px]">
              <div className="w-[38px] flex flex-col">
                {RightA1}
                {RightA}
              </div>
              <div className="w-[38px] flex flex-col">{RightB}</div>
            </div>
          </div>
        </div>
        {/* command */}
        <div className="h-[4px] shrink-0 bg-[#f6f6f6]" />
        <div className="h-[55px] shrink-0 border-t-2 border-l-2 border-[#777] bg-white text-[13px] text-[#111] flex flex-col">
          <div className="h-[32px] pl-[3px] border-b border-[#999] flex flex-col">
            <span className="h-[17px] -mt-[2px] leading-[17px]">命令:</span>
            <span className="h-[17px] pl-[7px] leading-[17px]">指定对角点:</span>
          </div>
          <div className="flex items-center h-[19px] pl-[3px]">
            <span className="leading-[17px]">命令:</span>
            <div className="ml-[10px] w-[2px] h-[14px] bg-black" />
          </div>
        </div>
        {/* status */}
        <div className="h-[23px] shrink-0 bg-[#f0f0f0] border-t border-[#ddd] border-b-2 border-b-[#999] flex items-center pt-[1px]">
          <span className="ml-[3px] text-[12.25px] leading-none text-[#222] whitespace-pre">2263.544779,  2419.101313,  0.000000</span>
          <div className="flex-1" />
          <div className="flex items-center mr-[4px]">
            <StatusBtn t="栅格" w="w-[26px]" />
            <div className="w-[8px]" />
            <StatusBtn t="正交" on w="w-[34px]" />
            <div className="w-[4px]" />
            <StatusBtn t="极轴" w="w-[26px]" />
            <div className="w-[8px]" />
            <StatusBtn t="对象捕捉" on w="w-[58px]" />
            <div className="w-[2px]" />
            <StatusBtn t="对象追踪" on w="w-[58px]" />
            <div className="w-[2px]" />
            <StatusBtn t="DYN" on w="w-[36px]" />
            <div className="w-[3px]" />
            <StatusBtn t="线宽" w="w-[26px]" />
            <span className="ml-[11px] w-[146px] text-[12px] leading-none text-[#1111e8] whitespace-pre">提交软件问题或增加新功能</span>
            <div className="ml-[9px] w-[72px] h-[16px] bg-white flex items-center justify-center gap-[3px]">
              <Logo s={16} />
              <span className="text-[13px] leading-none text-[#222] font-semibold">MxCAD</span>
            </div>
          </div>
        </div>
      </div>
      {/* watermark */}
      <div className="absolute left-[748px] top-[762px] w-[371px] h-[74px] bg-white flex flex-col justify-center pl-[4px] [font-family:'Noto_Sans_CJK_SC',sans-serif] font-bold text-[27.7px] text-[#ffd23f] whitespace-pre">
        <span className="h-[32px] leading-[32px]">电脑CAD软件：CAD梦想画图</span>
        <span className="h-[32px] leading-[32px]">手机CAD软件：CAD梦想看图</span>
      </div>
    </div>
  );
}
